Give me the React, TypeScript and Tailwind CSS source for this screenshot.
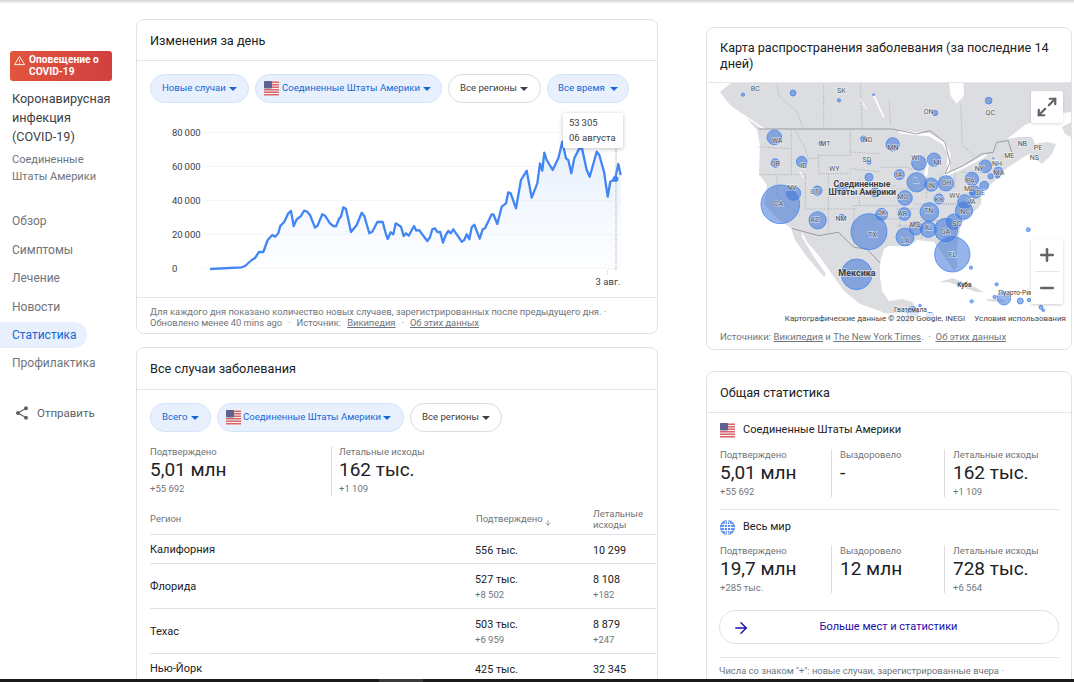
import React from 'react';
import { ArrowDown, ArrowRight, Maximize2, Minus, Plus } from 'lucide-react';

// line traced from the picture, two runs with their own offset
const lineA = [
  [45, 447], [140, 442], [150, 438], [170, 420], [180, 414], [192, 396], [205, 396], [218, 360], [232, 345], [240, 350],
  [250, 340], [256, 318], [268, 305], [280, 280], [288, 273], [296, 318], [305, 298], [318, 288], [327, 272], [335, 274],
  [345, 285], [360, 323], [368, 316], [382, 283], [390, 287], [405, 310], [415, 318], [423, 319], [433, 295], [438, 290],
  [445, 262], [453, 267], [468, 336], [485, 315], [500, 278], [508, 288], [523, 340], [532, 335], [547, 306], [563, 306],
  [572, 340], [578, 357], [587, 337], [595, 343], [602, 310], [618, 320], [626, 348], [633, 340], [641, 347], [657, 318],
  [664, 332], [672, 330], [697, 363], [705, 352], [712, 328], [720, 325], [727, 336], [736, 336], [744, 368], [752, 345],
  [760, 333], [768, 340], [775, 328], [800, 365], [808, 360], [815, 343], [823, 358], [830, 322], [838, 314], [854, 356],
].map(([x, y]) => [195 + x / 3, 120 + y / 3]);
const lineB = [
  [8, 388], [15, 385], [35, 343], [40, 343], [52, 372], [65, 320], [78, 310], [85, 277], [92, 280], [108, 325],
  [123, 240], [140, 212], [155, 293], [172, 250], [180, 190], [187, 212], [193, 158], [200, 180], [218, 210], [235, 175],
  [247, 125], [258, 175], [265, 180], [274, 220], [283, 175], [298, 145], [306, 145], [320, 210], [329, 230], [350, 155],
  [358, 165], [372, 215], [383, 290], [391, 245], [405, 238], [415, 192], [422, 225],
].map(([x, y]) => [480 + x / 3, 100 + y / 3]);
const linePts = [...lineA, ...lineB];
const lineStr = linePts.map((p) => p.map((n) => n.toFixed(1)).join(',')).join(' ');
const areaStr = `${lineStr} 620.7,268.5 210,268.5`;

const yTicks = [
  { y: 132.5, label: '80\u2009000' },
  { y: 166.5, label: '60\u2009000' },
  { y: 200.5, label: '40\u2009000' },
  { y: 234.5, label: '20\u2009000' },
  { y: 268.5, label: '0' },
];

const bubbles = [
  [129, 227, 5], [279, 222, 9], [417, 244, 5], [521, 227, 3], [866, 245, 10], [705, 282, 8], [223, 355, 22], [364, 373, 7],
  [491, 360, 9], [578, 376, 20], [226, 432, 13], [305, 428, 16], [507, 430, 6], [657, 432, 22], [702, 422, 20], [598, 467, 15],
  [507, 475, 12], [650, 490, 29], [694, 497, 20], [738, 493, 23], [856, 442, 19], [880, 418, 2], [895, 458, 14], [872, 472, 8],
  [893, 472, 6], [816, 480, 20], [853, 500, 13], [818, 520, 7], [826, 520, 18], [794, 548, 21], [717, 540, 15], [615, 537, 22],
  [688, 579, 28], [792, 575, 26], [762, 608, 23], [738, 633, 35], [685, 631, 24], [648, 628, 20], [615, 654, 27], [613, 585, 19],
  [545, 586, 18], [507, 638, 54], [525, 520, 14], [425, 595, 9], [353, 604, 26], [425, 510, 16], [352, 515, 14], [281, 523, 21],
  [241, 556, 58], [757, 706, 53], [470, 766, 46], [985, 632, 6], [813, 746, 5], [890, 796, 5], [815, 847, 5], [884, 834, 5],
  [912, 838, 20], [961, 846, 9], [987, 843, 5], [1023, 865, 6], [1030, 874, 4], [638, 880, 17], [690, 892, 12], [660, 860, 4],
];

const stateLabels: [string, number, number][] = [
  ['BC', 166, 208], ['SK', 424, 215], ['ON', 686, 278], ['QC', 871, 282], ['WA', 231, 366], ['MT', 376, 373], ['ND', 503, 363],
  ['MN', 579, 387], ['OR', 226, 433], ['ID', 311, 440], ['WY', 403, 450], ['SD', 501, 422], ['WI', 646, 416], ['MI', 712, 432],
  ['IA', 597, 466], ['IL', 648, 485], ['IN', 695, 499], ['OH', 739, 492], ['NY', 838, 449], ['NH', 891, 433], ['MA', 897, 460],
  ['ME', 928, 411], ['NB', 967, 373], ['PE', 1014, 387], ['NS', 1003, 416], ['PA', 811, 486], ['MD', 808, 509], ['DE', 842, 522],
  ['WV', 764, 530], ['VA', 814, 549], ['KY', 717, 541], ['MO', 608, 533], ['TN', 686, 576], ['NC', 795, 579], ['SC', 770, 613],
  ['GA', 736, 639], ['AL', 686, 627], ['MS', 645, 618], ['LA', 616, 664], ['AR', 608, 583], ['OK', 545, 581], ['TX', 517, 646],
  ['NM', 423, 600], ['AZ', 344, 601], ['UT', 344, 517], ['NV', 275, 507], ['CA', 236, 553], ['FL', 758, 706],
];

const dashed = [
  'M231 189 L236 229 L291 279 L311 329', 'M371 189 V329', 'M481 189 L486 329', 'M567 249 L572 319', 'M782 259 L787 379 L827 414',
  'M176 384 L271 389', 'M274 334 V464', 'M176 467 H311', 'M286 334 L311 379 L326 419 L356 417', 'M356 409 H451', 'M451 334 V409',
  'M451 399 L541 404', 'M451 449 L541 459', 'M356 409 V464 H451', 'M316 464 V570', 'M231 470 V530 L300 590', 'M316 570 H470',
  'M385 464 V640', 'M462 560 V680', 'M478 480 V560', 'M478 500 H590', 'M462 560 H600', 'M510 600 H600 V630', 'M590 570 H660',
  'M575 510 H625', 'M545 445 H630', 'M625 450 H680', 'M640 555 H780', 'M730 555 H820', 'M660 605 H740', 'M710 605 V660',
  'M665 605 V660', 'M590 620 H640', 'M765 455 V510', 'M785 460 H845', 'M720 470 V530', 'M680 470 V540',
];

function Flag() {
  return (
    <svg viewBox="0 0 15 15" className="w-[15px] h-[15px] shrink-0">
      <rect width="15" height="15" rx="2" fill="#f4f4f4" />
      {[0.5, 3, 5.5, 8, 10.5, 13].map((y) => (
        <rect key={y} y={y} width="15" height="1.5" fill="#d9656a" />
      ))}
      <rect width="8" height="7.5" rx="1" fill="#5c6390" />
    </svg>
  );
}

function Caret() {
  return <span className="w-0 h-0 border-x-[4px] border-x-transparent border-t-[4px] border-t-current shrink-0" />;
}

function Chip({ label, active, flag, className }: { label: string; active?: boolean; flag?: boolean; className: string }) {
  return (
    <div
      className={`h-[29px] flex items-center justify-between rounded-full border text-[9.6px] whitespace-nowrap ${
        active ? 'bg-[#e8f0fe] border-[#d2e3fc] text-[#1967d2]' : 'bg-white border-[#dadce0] text-[#3c4043]'
      } ${className}`}
    >
      {flag && <Flag />}
      <span>{label}</span>
      <Caret />
    </div>
  );
}

function Card({ title, className, children }: { title: React.ReactNode; className: string; children: React.ReactNode }) {
  return (
    <section className={`border border-[#dfe1e5] rounded-lg bg-white ${className}`}>
      <div className="border-b border-[#e4e6e9] px-[13px] text-[12.7px] leading-[16px] text-[#202124]">{title}</div>
      {children}
    </section>
  );
}

function Stat({ label, value, sub, className }: { label: string; value: string; sub?: string; className: string }) {
  return (
    <div className={className}>
      <div className="text-[9.5px] leading-[12px] text-[#70757a] whitespace-nowrap">{label}</div>
      <div className="text-[19px] leading-[24px] text-[#202124] whitespace-nowrap">{value}</div>
      {sub && <div className="text-[9.5px] leading-[12px] mt-[1px] text-[#70757a]">{sub}</div>}
    </div>
  );
}

function StatRow({ a, b, c }: { a: string[]; b: string[]; c: string[] }) {
  return (
    <div className="flex h-[48px] mx-[13px]">
      <Stat label="Подтверждено" value={a[0]} sub={a[1]} className="w-[111px]" />
      <Stat label="Выздоровело" value={b[0]} sub={b[1]} className="w-[113px] pl-[8px] border-l border-[#dadce0]" />
      <Stat label="Летальные исходы" value={c[0]} sub={c[1]} className="pl-[8px] border-l border-[#dadce0]" />
    </div>
  );
}

function Row({ name, v1, v2, s1, s2, h }: { name: string; v1: string; v2: string; s1?: string; s2?: string; h: string }) {
  return (
    <div className={`flex items-center border-b border-[#dfe1e5] pt-[2px] text-[10.8px] text-[#202124] ${h}`}>
      <div className="w-[325px] text-[11px]">{name}</div>
      <div className="w-[118px]">
        <div className="leading-[15px]">{v1}</div>
        {s1 && <div className="text-[9.5px] leading-[15px] text-[#70757a]">{s1}</div>}
      </div>
      <div>
        <div className="leading-[15px]">{v2}</div>
        {s2 && <div className="text-[9.5px] leading-[15px] text-[#70757a]">{s2}</div>}
      </div>
    </div>
  );
}

function Sidebar() {
  const nav = ['Обзор', 'Симптомы', 'Лечение', 'Новости', 'Статистика', 'Профилактика'];
  return (
    <aside className="w-[136px] shrink-0 pt-[51px]">
      <div className="ml-[10px] w-[102px] h-[30px] rounded-[3px] bg-gradient-to-r from-[#e2553d] to-[#d13f40] flex text-white text-[10.2px] leading-[12px] font-bold pt-[3px] pl-[4px]">
        <svg viewBox="0 0 24 24" className="w-[11px] h-[11px] mr-[4px] mt-[1px] shrink-0" fill="none" stroke="white" strokeWidth="2">
          <path d="M12 3 L23 21 H1 Z M12 10 V15 M12 17 V19" />
        </svg>
        <span>Оповещение о COVID-19</span>
      </div>
      <h1 className="ml-[12px] mt-[8px] text-[12.6px] leading-[19px] text-[#3c4043]">
        Коронавирусная
        <br />
        инфекция
        <br />
        (COVID-19)
      </h1>
      <div className="ml-[12px] mt-[5px] text-[11px] leading-[17px] text-[#70757a]">
        Соединенные
        <br />
        Штаты Америки
      </div>
      <nav className="mt-[22px] text-[12px] text-[#70757a]">
        {nav.map((item) =>
          item === 'Статистика' ? (
            <div key={item} className="w-[87px] h-[26px] my-[1px] flex items-center pl-[12px] rounded-r-full bg-[#e8f0fe] text-[#1967d2]">
              {item}
            </div>
          ) : (
            <div key={item} className="h-[28.5px] flex items-center pl-[12px]">
              {item}
            </div>
          ),
        )}
      </nav>
      <div className="mt-[27px] ml-[14px] flex items-center gap-[7px] text-[11.5px] text-[#5f6368]">
        <svg viewBox="0 0 24 24" className="w-[16px] h-[16px]" fill="#5f6368">
          <path d="M18 16.08c-.76 0-1.44.3-1.96.77L8.91 12.7c.05-.23.09-.46.09-.7s-.04-.47-.09-.7l7.05-4.11c.54.5 1.25.81 2.04.81 1.66 0 3-1.34 3-3s-1.34-3-3-3-3 1.34-3 3c0 .24.04.47.09.7L8.04 9.81C7.5 9.31 6.79 9 6 9c-1.66 0-3 1.34-3 3s1.34 3 3 3c.79 0 1.5-.31 2.04-.81l7.12 4.16c-.05.21-.08.43-.08.65 0 1.61 1.31 2.92 2.92 2.92 1.61 0 2.92-1.31 2.92-2.92s-1.31-2.92-2.92-2.92z" />
        </svg>
        <span>Отправить</span>
      </div>
    </aside>
  );
}

function Chart() {
  return (
    <div className="relative h-[194px]">
      <svg viewBox="137 103 520 194" className="w-[520px] h-[194px] block">
        <defs>
          <linearGradient id="area" x1="0" y1="0" x2="0" y2="1">
            <stop offset="0" stopColor="#d2e3fc" stopOpacity="0.6" />
            <stop offset="1" stopColor="#e8f0fe" stopOpacity="0.1" />
          </linearGradient>
        </defs>
        {yTicks.map((t) => (
          <g key={t.y}>
            <line x1="203" x2="621" y1={t.y} y2={t.y} stroke="#f5f6f7" />
            <text x="172" y={t.y + 3.5} fontSize="9.5" fill="#3c4043">
              {t.label}
            </text>
          </g>
        ))}
        <polygon points={areaStr} fill="url(#area)" />
        <polyline points={lineStr} fill="none" stroke="#4285f4" strokeWidth="2.3" strokeLinejoin="round" />
        <line x1="616" x2="616" y1="147" y2="270" stroke="#9aa0a6" strokeDasharray="1 1" />
        <circle cx="615.5" cy="179" r="3" fill="#4285f4" />
        <line x1="607.5" x2="607.5" y1="270" y2="275" stroke="#e4e6e9" />
        <text x="608" y="285" fontSize="9.5" fill="#3c4043" textAnchor="middle">
          3 авг.
        </text>
      </svg>
      <div className="absolute left-[426px] top-[10px] w-[60px] h-[35px] bg-white rounded-[2px] shadow-[0_1px_4px_rgba(0,0,0,0.25)] pl-[6px] pt-[2px] text-[9.5px] leading-[15px] text-[#3c4043]">
        <div>53&thinsp;305</div>
        <div>06 августа</div>
      </div>
    </div>
  );
}

function MapView() {
  return (
    <div className="relative h-[241px] overflow-hidden">
      <svg viewBox="0 1 364 241" className="w-[364px] h-[241px] block">
        <polygon
          fill="#dcdde0"
          points="25,0 13,10 23,23 37,33 50,48 53,63 52,92 60,103 57,122 72,138 84,146 88,158 100,175 117,195 119,192 107,175 95,155 95,150 100,160 113,175 127,195 137,209 153,222 173,229 185,235 195,242 205,242 212,229 205,220 195,217 182,219 175,209 173,195 173,181 177,167 182,164 202,164 210,158 227,160 239,177 247,189 250,185 250,165 254,142 272,125 274,122 275,110 292,95 297,88 312,78 322,72 335,82 345,72 349,62 340,60 328,62 325,55 312,55 300,57 318,43 340,33 364,30 364,0"
        />
        <polygon fill="#dcdde0" points="355,45 364,40 364,55 358,52" />
        <g transform="translate(-7,-63) scale(0.3333)">
          <polygon fill="white" points="747,189 790,189 792,230 770,254 752,230" />
          <polygon fill="#dcdde0" points="717,790 757,777 807,795 852,820 832,820 787,805 747,790" />
          <polygon fill="#dcdde0" points="857,840 907,840 917,850 867,847" />
          <g fill="none" stroke="white" strokeLinecap="round">
            <path d="M131 289 L191 329" strokeWidth="5" />
            <path d="M521 229 L551 294" strokeWidth="5" />
            <path d="M480 240 L500 270" strokeWidth="3" />
            <path d="M601 339 L655 345 L689 347 L732 374 L747 404 L745 449 L735 470" strokeWidth="9" />
            <path d="M736 470 L777 451 L822 429 L857 409" strokeWidth="7" />
            <path d="M682 424 L678 470" strokeWidth="10" />
            <path d="M300 460 L310 475" strokeWidth="4" />
          </g>
          <g fill="none" stroke="#8f9297" strokeWidth="1.8" strokeDasharray="3 4">
            {dashed.map((d) => (
              <path key={d} d={d} />
            ))}
          </g>
          <g fill="none" stroke="#8d9094" strokeWidth="2.5">
            <path d="M176 330 H575 L600 335 L650 345 L690 335 L735 370 L750 430 L735 465 L790 440 L845 405 L880 400 L890 370 L925 365 L935 400" />
            <path d="M275 628 L356 650 L416 640 L461 685 L501 690 L541 733" />
          </g>
          {bubbles.map(([x, y, r]) => (
            <circle key={`${x}-${y}`} cx={x} cy={y} r={r} fill="#3f75d8" fillOpacity="0.55" stroke="#4285f4" strokeOpacity="0.8" strokeWidth="3" />
          ))}
          <g fontSize="21" fill="#4f5357" textAnchor="middle" stroke="white" strokeOpacity="0.55" strokeWidth="4" paintOrder="stroke">
            {stateLabels.map(([t, x, y]) => (
              <text key={t} x={x} y={y + 7}>
                {t}
              </text>
            ))}
          </g>
          <g fontWeight="700" fill="#3c4043" textAnchor="middle" stroke="white" strokeOpacity="0.6" strokeWidth="4" paintOrder="stroke">
            <text x="486" y="503" fontSize="26">Соединенные</text>
            <text x="487" y="528" fontSize="26">Штаты Америки</text>
            <text x="471" y="772" fontSize="27">Мексика</text>
            <text x="793" y="803" fontSize="19">Куба</text>
          </g>
          <g fontSize="20" fill="#3c4043" stroke="white" strokeOpacity="0.6" strokeWidth="4" paintOrder="stroke">
            <text x="895" y="828">Пуэрто-Рико</text>
            <text x="582" y="880">Гватемала</text>
          </g>
        </g>
      </svg>
      <div className="absolute right-[8px] top-[8px] w-[32px] h-[32px] bg-white rounded-[2px] shadow-[0_1px_3px_rgba(0,0,0,0.15)] flex items-center justify-center text-[#5f6368]">
        <Maximize2 className="w-[22px] h-[22px]" strokeWidth={2.4} />
      </div>
      <div className="absolute right-[8px] top-[156px] w-[32px] h-[65px] bg-white rounded-[2px] shadow-[0_1px_3px_rgba(0,0,0,0.2)] flex flex-col items-center text-[#666]">
        <div className="h-[32px] w-full flex items-center justify-center">
          <Plus className="w-[20px] h-[20px]" strokeWidth={3} />
        </div>
        <div className="w-[24px] border-t border-[#e6e6e6]" />
        <div className="h-[32px] w-full flex items-center justify-center">
          <Minus className="w-[20px] h-[20px]" strokeWidth={3} />
        </div>
      </div>
      <div className="absolute right-0 bottom-0 h-[11px] pl-[4px] pr-[5px] flex gap-[9px] bg-white/75 text-[8px] leading-[11px] text-[#444] whitespace-nowrap">
        <span>Картографические данные © 2020 Google, INEGI</span>
        <span>Условия использования</span>
      </div>
    </div>
  );
}

export default function App() {
  return (
    <div className="relative w-[1074px] h-[682px] overflow-hidden bg-white font-['Roboto','Liberation_Sans',sans-serif]">
      <div className="absolute top-0 inset-x-0 h-[4px] bg-gradient-to-b from-[#d4d4d4] to-white" />
      <div className="flex">
        <Sidebar />
        <main className="w-[522px] shrink-0 pt-[19px]">
          <Card title={<div className="pt-[13px] pb-[11px]">Изменения за день</div>} className="h-[315px]">
            <div className="flex pt-[13px] px-[13px] gap-[6px]">
              <Chip label="Новые случаи" active className="w-[99px] px-[11px]" />
              <Chip label="Соединенные Штаты Америки" active flag className="w-[187px] pl-[8px] pr-[10px]" />
              <Chip label="Все регионы" className="w-[93px] pl-[11px] pr-[12px]" />
              <Chip label="Все время" active className="w-[82px] px-[10px]" />
            </div>
            <Chart />
            <div className="border-t border-[#e4e6e9] px-[13px] pt-[8px] text-[9.4px] leading-[11px] text-[#70757a]">
              <div className="whitespace-nowrap">Для каждого дня показано количество новых случаев, зарегистрированных после предыдущего дня. ·</div>
              <div className="flex gap-[6px] whitespace-nowrap">
                <span>Обновлено менее 40 mins ago</span>
                <span>·</span>
                <span>Источник:</span>
                <span className="underline">Википедия</span>
                <span>·</span>
                <span className="underline">Об этих данных</span>
              </div>
            </div>
          </Card>
          <Card title={<div className="pt-[13px] pb-[12px]">Все случаи заболевания</div>} className="h-[400px] mt-[13px]">
            <div className="flex pt-[13px] px-[13px] gap-[6px]">
              <Chip label="Всего" active className="w-[61px] px-[11px]" />
              <Chip label="Соединенные Штаты Америки" active flag className="w-[187px] pl-[8px] pr-[12px]" />
              <Chip label="Все регионы" className="w-[92px] px-[11px]" />
            </div>
            <div className="flex mx-[13px] mt-[14px] h-[50px]">
              <Stat label="Подтверждено" value="5,01 млн" sub="+55 692" className="w-[181px]" />
              <Stat label="Летальные исходы" value="162 тыс." sub="+1 109" className="pl-[7px] border-l border-[#dadce0]" />
            </div>
            <div className="ml-[13px] mr-[1px] mt-[8px]">
              <div className="flex items-center h-[31px] pb-[1px] border-b border-[#dfe1e5] text-[9.5px] leading-[11px] text-[#70757a]">
                <div className="w-[326px]">Регион</div>
                <div className="w-[117px] flex items-end">
                  Подтверждено
                  <ArrowDown className="w-[8px] h-[8px] ml-[1px] mb-[-3px]" />
                </div>
                <div>
                  Летальные
                  <br />
                  исходы
                </div>
              </div>
              <Row name="Калифорния" v1="556 тыс." v2="10 299" h="h-[29px]" />
              <Row name="Флорида" v1="527 тыс." s1="+8 502" v2="8 108" s2="+182" h="h-[45px]" />
              <Row name="Техас" v1="503 тыс." s1="+6 959" v2="8 879" s2="+247" h="h-[45px]" />
              <Row name="Нью-Йорк" v1="425 тыс." v2="32 345" h="h-[29px]" />
            </div>
          </Card>
        </main>
        <div className="w-[366px] shrink-0 ml-[48px] pt-[27px]">
          <Card title={<div className="pt-[12px] pb-[10px]">Карта распространения заболевания (за последние 14 дней)</div>} className="h-[323px]">
            <MapView />
            <div className="px-[13px] pt-[6px] text-[9.6px] leading-[14px] text-[#70757a] whitespace-nowrap">
              Источники: <span className="underline">Википедия</span> и <span className="underline">The New York Times</span>. &nbsp;·&nbsp; <span className="underline">Об этих данных</span>
            </div>
          </Card>
          <Card title={<div className="pt-[13px] pb-[11px]">Общая статистика</div>} className="h-[340px] mt-[21px]">
            <div className="flex items-center gap-[8px] ml-[13px] h-[32px] pt-[2px] mb-[4px] text-[11px] text-[#202124]">
              <Flag />
              <span>Соединенные Штаты Америки</span>
            </div>
            <StatRow a={['5,01 млн', '+55 692']} b={['-']} c={['162 тыс.', '+1 109']} />
            <div className="mx-[12px] mt-[12px] border-t border-[#e4e6e9]" />
            <div className="flex items-center gap-[8px] ml-[13px] h-[32px] pt-[2px] mb-[3px] text-[11px] text-[#202124]">
              <svg viewBox="0 0 24 24" className="w-[15px] h-[15px] shrink-0" fill="none" stroke="white" strokeWidth="1.6">
                <circle cx="12" cy="12" r="12" fill="#5b8def" stroke="none" />
                <path d="M1 12 H23 M3 7 H21 M3 17 H21 M12 0 V24 M12 0 C5 6 5 18 12 24 M12 0 C19 6 19 18 12 24" />
              </svg>
              <span>Весь мир</span>
            </div>
            <StatRow a={['19,7 млн', '+285 тыс.']} b={['12 млн']} c={['728 тыс.', '+6 564']} />
            <div className="relative mx-[12px] mt-[17px] h-[34px] pt-[1px] rounded-full border border-[#dfe1e5] flex items-center justify-center text-[11px] text-[#1a0dab]">
              <ArrowRight className="absolute left-[12px] w-[18px] h-[18px]" strokeWidth={1.8} />
              <span className="ml-[-1px]">Больше мест и статистики</span>
            </div>
            <div className="mx-[12px] mt-[13px] border-t border-[#e4e6e9] pt-[7px] text-[9.4px] leading-[12px] text-[#70757a] whitespace-nowrap">
              Числа со знаком "+": новые случаи, зарегистрированные вчера ·
            </div>
          </Card>
        </div>
      </div>
      <div className="absolute bottom-0 inset-x-0 h-[3px] bg-[#1b1b1b] flex">
        <div className="ml-[379px] w-[44px] bg-[#3a3a3a]" />
      </div>
    </div>
  );
}
